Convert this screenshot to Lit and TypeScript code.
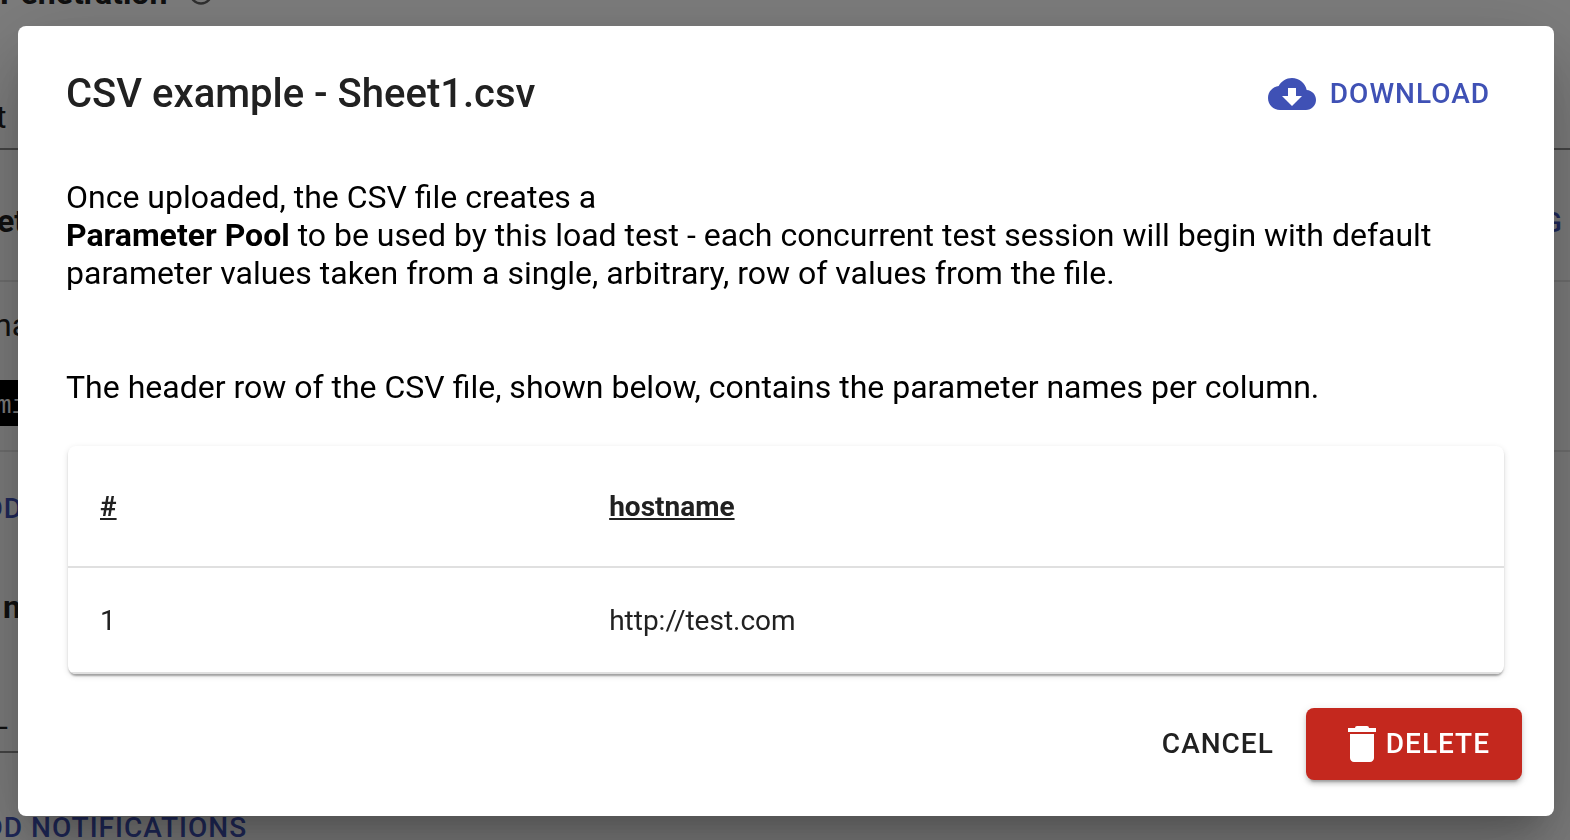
import { LitElement, html, css } from "lit";
import { customElement } from "lit/decorators.js";

@customElement("csv-dialog")
class CsvDialog extends LitElement {
  static styles = css`
    :host {
      display: block;
      background: #fff;
      border-radius: 8px;
      color: #212121;
      box-shadow: 0 22px 30px -14px rgba(0, 0, 0, 0.2), 0 48px 76px 6px rgba(0, 0, 0, 0.14),
        0 18px 92px 16px rgba(0, 0, 0, 0.12);
    }
    .head {
      display: flex;
      align-items: center;
      justify-content: space-between;
      padding: 32px 48px;
    }
    h2 {
      margin: 0;
      font-size: 40px;
      font-weight: 500;
      line-height: 68px;
    }
    .button {
      display: flex;
      align-items: center;
      border: 0;
      border-radius: 8px;
      background: none;
      padding: 12px 16px;
      font: 500 28px/48px Roboto, sans-serif;
      letter-spacing: 1px;
      color: inherit;
      cursor: pointer;
    }
    .button svg {
      width: 48px;
      height: 48px;
      fill: currentColor;
    }
    .download {
      gap: 14px;
      color: #3f51b5;
    }
    .delete {
      padding: 12px 32px;
      background: #c4281e;
      color: #fff;
      box-shadow: 0 6px 2px -4px rgba(0, 0, 0, 0.2), 0 4px 4px rgba(0, 0, 0, 0.14),
        0 2px 10px rgba(0, 0, 0, 0.12);
    }
    .body {
      padding: 16px 48px;
      color: #000;
      font-size: 32px;
      line-height: 38px;
    }
    p {
      margin: 0;
    }
    .names {
      margin: 76px 0 40px;
    }
    b {
      font-weight: 700;
    }
    .card {
      margin: 0 2px;
      border-radius: 8px;
      overflow: hidden;
      color: #212121;
      box-shadow: 0 4px 2px -2px rgba(0, 0, 0, 0.2), 0 2px 2px rgba(0, 0, 0, 0.14),
        0 2px 6px rgba(0, 0, 0, 0.12);
    }
    table {
      width: 100%;
      table-layout: fixed;
      border-collapse: separate;
      border-spacing: 0;
      font-size: 28px;
      line-height: 40px;
    }
    th,
    td {
      padding: 33px 32px 31px;
      text-align: left;
      border-bottom: 2px solid #e0e0e0;
    }
    th {
      padding: 41px 32px 39px;
      font-weight: 700;
      text-decoration: underline;
    }
    .index {
      width: 31%;
    }
    .actions {
      display: flex;
      justify-content: flex-end;
      gap: 16px;
      padding: 18px 32px 36px;
    }
  `;

  render() {
    return html`
      <header class="head">
        <h2>CSV example - Sheet1.csv</h2>
        <button class="button download">
          <svg viewBox="0 0 24 24" aria-hidden="true">
            <path d="M19.35 10.04C18.67 6.59 15.64 4 12 4 9.11 4 6.6 5.64 5.35 8.04 2.34 8.36 0 10.91 0 14c0 3.31 2.69 6 6 6h13c2.76 0 5-2.24 5-5 0-2.64-2.05-4.78-4.65-4.96zM17 13l-5 5-5-5h3V9h4v4h3z" />
          </svg>
          DOWNLOAD
        </button>
      </header>
      <div class="body">
        <p>Once uploaded, the CSV file creates a</p>
        <p>
          <b>Parameter Pool</b> to be used by this load test - each concurrent test session will begin with
          default parameter values taken from a single, arbitrary, row of values from the file.
        </p>
        <p class="names">The header row of the CSV file, shown below, contains the parameter names per column.</p>
        <div class="card">
          <table>
            <thead>
              <tr><th class="index" scope="col">#</th><th scope="col">hostname</th></tr>
            </thead>
            <tbody>
              <tr><td>1</td><td>http://test.com</td></tr>
            </tbody>
          </table>
        </div>
      </div>
      <footer class="actions">
        <button class="button">CANCEL</button>
        <button class="button delete">
          <svg viewBox="0 0 24 24" aria-hidden="true">
            <path d="M6 19c0 1.1.9 2 2 2h8c1.1 0 2-.9 2-2V7H6v12zM19 4h-3.5q0-1-1-1h-5q-1 0-1 1H5v2h14V4z" />
          </svg>
          DELETE
        </button>
      </footer>
    `;
  }
}

@customElement("settings-page")
class SettingsPage extends LitElement {
  static styles = css`
    :host {
      display: block;
      color: #212121;
      font-size: 32px;
      line-height: 38px;
      white-space: nowrap;
    }
    .title {
      display: flex;
      align-items: center;
      gap: 20px;
      margin: -26px 0 86px;
      font-weight: 700;
    }
    .title svg {
      width: 28px;
      height: 28px;
      fill: #616161;
    }
    .field {
      height: 50px;
      text-indent: -4px;
      border-bottom: 2px solid #8c8c8c;
    }
    .section {
      display: flex;
      justify-content: space-between;
      height: 78px;
      margin: 52px -20px 24px -3px;
      border-bottom: 2px solid #e0e0e0;
      font-weight: 700;
    }
    .link {
      color: #3f51b5;
      font-size: 28px;
      font-weight: 500;
      line-height: 42px;
      letter-spacing: 1px;
      text-decoration: none;
    }
    .name {
      text-indent: -6px;
    }
    .code {
      width: 50%;
      margin: 36px 0 24px;
      padding-top: 6px;
      background: #000;
      color: #fafafa;
      font: 26px/40px "Liberation Mono", monospace;
      text-indent: -4px;
    }
    .add {
      display: block;
      margin-left: -35px;
    }
    .pool {
      border-top: 2px solid #e0e0e0;
      padding-top: 36px;
    }
    .heading {
      margin: 58px 0 83px;
      padding-left: 3px;
      font-weight: 700;
    }
    .value {
      width: 50%;
      height: 42px;
      margin-bottom: 54px;
      text-indent: -11px;
      border-bottom: 2px solid #8c8c8c;
    }
  `;

  render() {
    return html`
      <div class="title">
        <span>Penetration</span>
        <svg viewBox="0 0 24 24" aria-hidden="true">
          <path d="M12 2a10 10 0 1 0 0 20 10 10 0 0 0 0-20zm0 18a8 8 0 1 1 0-16 8 8 0 0 1 0 16z" />
        </svg>
      </div>
      <div class="field">t</div>
      <div class="section"><span>et</span><a class="link" href="#">G C</a></div>
      <div class="name">na</div>
      <div class="code">mi</div>
      <div class="pool"><a class="link add" href="#">ADD</a></div>
      <div class="heading">n</div>
      <div class="value">–</div>
      <a class="link add" href="#">ADD NOTIFICATIONS</a>
    `;
  }
}

@customElement("app-root")
class AppRoot extends LitElement {
  static styles = css`
    :host {
      display: flow-root;
      font-family: Roboto, sans-serif;
      background: #fafafa;
      height: 100vh;
      overflow: hidden;
    }
    .overlay {
      position: fixed;
      inset: 0;
      display: flex;
      align-items: center;
      background: rgba(0, 0, 0, 0.5);
      padding: 26px 16px 24px 18px;
    }
    csv-dialog {
      flex: 1;
    }
  `;

  render() {
    return html`
      <settings-page></settings-page>
      <div class="overlay">
        <csv-dialog role="dialog" aria-modal="true" aria-label="CSV example - Sheet1.csv"></csv-dialog>
      </div>
    `;
  }
}
